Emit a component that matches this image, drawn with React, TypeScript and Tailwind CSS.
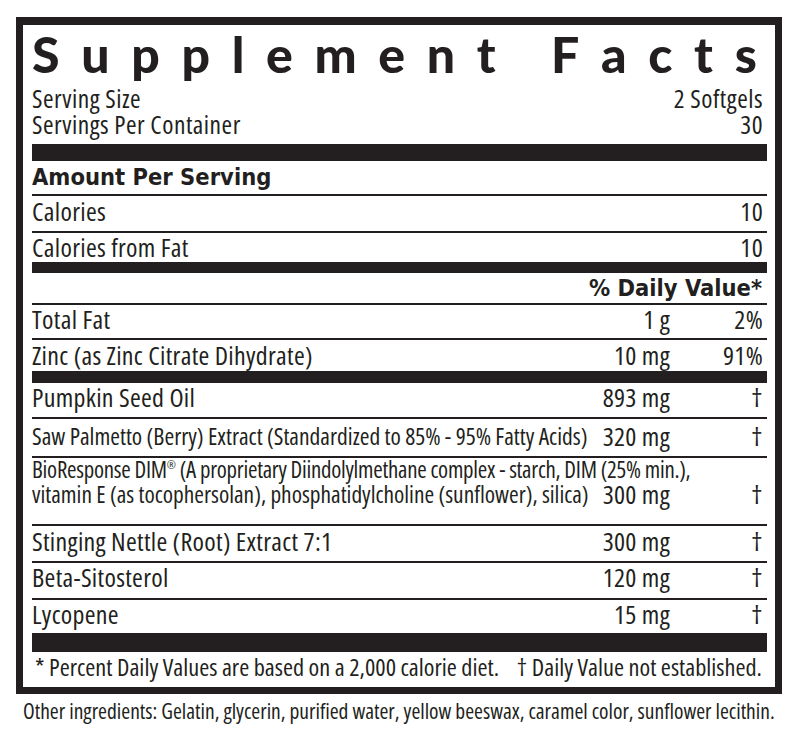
import React from "react";

interface IRowProps {
  label: React.ReactNode;
  amount?: string;
  dv?: React.ReactNode;
  className: string;
  labelClass?: string;
}

// one line of the facts table: name, amount, % daily value
const Row: React.FC<IRowProps> = ({ label, amount, dv, className, labelClass = "" }) => (
  <div className={`flex border-b-2 border-[#231f20] text-[26px] leading-[28px] tracking-[0.3px] ${className}`}>
    <div className={`min-w-0 flex-1 whitespace-nowrap ${labelClass}`}>{label}</div>
    <div className="w-[80px] shrink-0 text-right">{amount}</div>
    <div className="w-[97px] shrink-0 pr-[4px] text-right">{dv}</div>
  </div>
);

const Bar = ({ className }: { className: string }) => <div className={`bg-[#231f20] ${className}`} />;

const heading = "font-['DejaVu_Sans',sans-serif] font-stretch-condensed font-bold text-[23.5px] leading-[28px]";

export default function App() {
  const title = "Supplement Facts".split("");

  return (
    <div className="h-[734px] w-[797px] bg-white pt-[17px] font-['Open_Sans',sans-serif] font-stretch-condensed text-[#231f20]">
      <div className="ml-[16px] w-[766px] border-[7px] border-t-[8px] border-[#231f20] pl-[9px] pr-[8px]">
        {/* title, spread over the full width */}
        <div className="flex h-[54px] justify-between pr-[10px] pt-[4px] font-['Lato',sans-serif] font-stretch-normal text-[50px] font-black leading-[50px]">
          {title.map((ch, i) =>
            ch === " " ? <span key={i} className="w-[12px]" /> : <span key={i}>{ch}</span>
          )}
        </div>

        <div className="mt-[6px] text-[25.5px] leading-[26px] tracking-[0.5px]">
          <div className="flex justify-between pr-[4px]">
            <span>Serving Size</span>
            <span>2 Softgels</span>
          </div>
          <div className="flex justify-between pr-[4px]">
            <span>Servings Per Container</span>
            <span>30</span>
          </div>
        </div>

        <Bar className="mt-[7px] h-[17px]" />

        <div className={`h-[35px] border-b-2 border-[#231f20] pt-[2px] ${heading}`}>Amount Per Serving</div>
        <Row className="h-[37px] pt-[1px]" label="Calories" dv="10" />
        <Row className="h-[31px] border-b-0 pt-0" label="Calories from Fat" dv="10" />
        <Bar className="h-[9px]" />

        <div className={`h-[32px] border-b-2 border-[#231f20] pr-[5px] pt-[1px] text-right ${heading}`}>% Daily Value*</div>
        <Row className="h-[35px] pt-0" label="Total Fat" amount="1 g" dv="2%" />
        <Row className="h-[33px] border-b-0 pt-[1px]" label="Zinc (as Zinc Citrate Dihydrate)" amount="10 mg" dv="91%" />
        <Bar className="h-[10px]" />

        <Row className="h-[36px] pt-0" label="Pumpkin Seed Oil" amount="893 mg" dv="†" />
        <Row
          className="h-[39px] pt-[3px]"
          labelClass="text-[23.5px] tracking-normal"
          label="Saw Palmetto (Berry) Extract (Standardized to 85% - 95% Fatty Acids)"
          amount="320 mg"
          dv="†"
        />

        <div className="h-[68px] border-b-2 border-[#231f20] text-[26px] leading-[24px] tracking-[0.3px]">
          <div className="whitespace-nowrap text-[22.9px] tracking-[-0.25px]">
            BioResponse DIM<span className="align-super text-[11px] leading-none">®</span> (A proprietary
            Diindolylmethane complex - starch, DIM (25% min.),
          </div>
          <div className="flex">
            <div className="min-w-0 flex-1 whitespace-nowrap text-[23.4px] tracking-normal">
              vitamin E (as tocophersolan), phosphatidylcholine (sunflower), silica)
            </div>
            <div className="w-[80px] shrink-0 text-right">300 mg</div>
            <div className="w-[97px] shrink-0 pr-[4px] text-right">†</div>
          </div>
        </div>

        <Row className="h-[37px] pt-[1px]" label="Stinging Nettle (Root) Extract 7:1" amount="300 mg" dv="†" />
        <Row className="h-[37px] pt-0" label="Beta-Sitosterol" amount="120 mg" dv="†" />
        <Row className="h-[35px] border-b-0 pt-0" label="Lycopene" amount="15 mg" dv="†" />
        <Bar className="h-[17px]" />

        <div className="flex h-[35px] justify-between whitespace-nowrap pl-[3px] pr-[5px] pt-[2px] text-[24.3px] leading-[26px]">
          <span>* Percent Daily Values are based on a 2,000 calorie diet.</span>
          <span>† Daily Value not established.</span>
        </div>
      </div>

      <p className="ml-[23px] mt-[4px] whitespace-nowrap text-[21.5px] leading-[26px]">
        Other ingredients: Gelatin, glycerin, purified water, yellow beeswax, caramel color, sunflower lecithin.
      </p>
    </div>
  );
}
